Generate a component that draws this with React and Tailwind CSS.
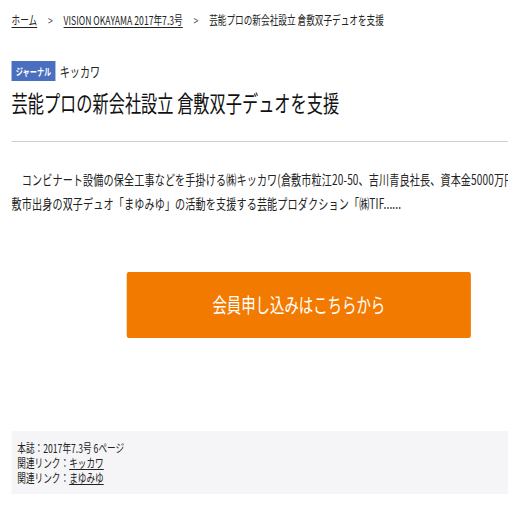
import React from 'react';

const font = { fontFamily: '"Noto Sans CJK JP", "Noto Sans", sans-serif' };

function Breadcrumb() {
  return (
    <nav className="pt-3 text-[12px] leading-[16px] text-[#222] flex items-center whitespace-nowrap">
      <a href="#" className="underline underline-offset-2">ホーム</a>
      <span className="mx-[15px] text-[#555]">&gt;</span>
      <a href="#" className="underline underline-offset-2">VISION OKAYAMA 2017年7.3号</a>
      <span className="mx-[15px] text-[#555]">&gt;</span>
      <span>芸能プロの新会社設立 倉敷双子デュオを支援</span>
    </nav>
  );
}

function ArticleHead() {
  return (
    <div>
      <div className="mt-[33px] flex items-center">
        <span className="h-[20px] w-[61px] bg-[#4a6fbf] text-white text-[10px] font-bold flex items-center justify-center">ジャーナル</span>
        <span className="ml-1.5 text-[14px] leading-[20px] text-[#222]">キッカワ</span>
      </div>
      <h1 className="mt-[5px] text-[22.5px] leading-[32px] text-[#111] whitespace-nowrap">芸能プロの新会社設立 倉敷双子デュオを支援</h1>
      <hr className="mt-[23px] border-0 border-t border-[#d0d0d0]" />
    </div>
  );
}

export default function App() {
  return (
    <div className="w-[508px] h-[508px] overflow-hidden bg-white" style={font}>
      <div className="w-[706px] origin-top-left scale-x-[0.72] pl-4">
        <Breadcrumb />
        <ArticleHead />

        <p className="mt-[25px] text-[14px] leading-6 text-[#222] whitespace-nowrap tracking-[0.2px]">
          {'\u3000'}コンビナート設備の保全工事などを手掛ける㈱キッカワ(倉敷市粒江20-50、吉川青良社長、資本金5000万円)は、倉
          <br />
          敷市出身の双子デュオ「まゆみゆ」の活動を支援する芸能プロダクション「㈱TIF......
        </p>

        <a href="#" className="mt-[57px] ml-[160px] w-[478px] h-[66px] rounded-[3px] bg-[#f27a00] text-white text-[20px] flex items-center justify-center">
          会員申し込みはこちらから
        </a>

        <div className="mt-[93px] bg-[#f5f5f7] pl-2 pt-[9px] pb-[9px] text-[12px] leading-[15px] text-[#222]">
          <div>本誌：2017年7.3号 6ページ</div>
          <div>関連リンク：<a href="#" className="underline">キッカワ</a></div>
          <div>関連リンク：<a href="#" className="underline">まゆみゆ</a></div>
        </div>
      </div>
    </div>
  );
}
